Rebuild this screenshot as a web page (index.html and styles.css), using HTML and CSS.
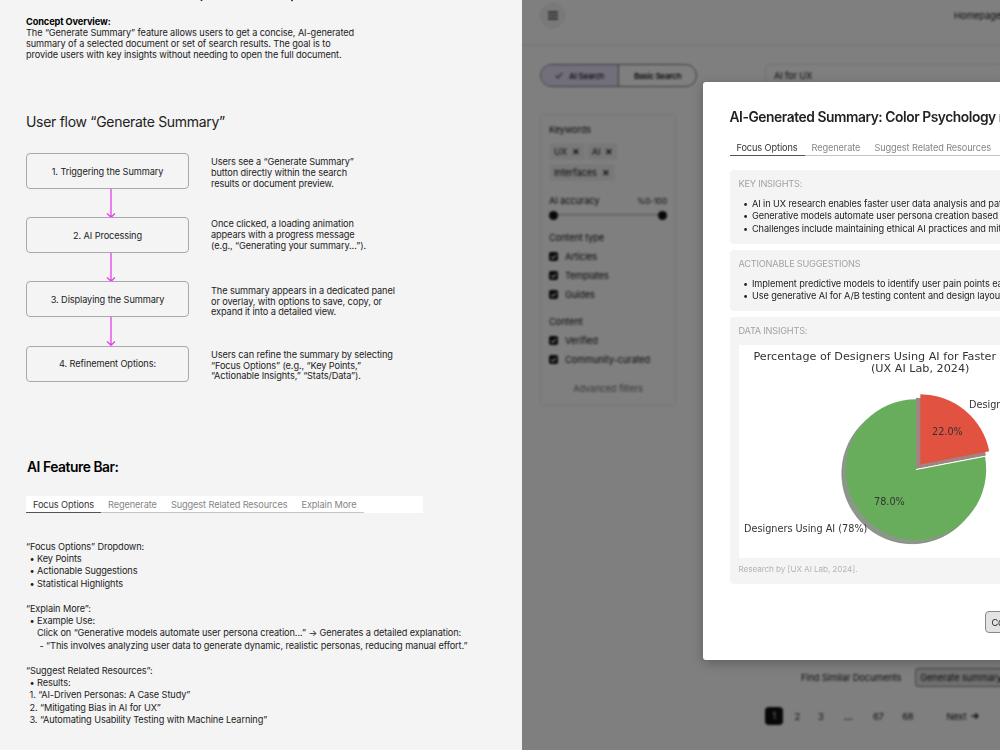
FILE: index.html
```html
<!DOCTYPE html>
<html lang="en">
<head>
    <meta charset="UTF-8">
    <title>Generate Summary - Concept</title>
    <link rel="stylesheet" href="styles.css">
</head>
<body>
    <!-- Concept notes -->
    <section class="notes">
        <svg class="title-tail" width="300" height="3" viewBox="0 0 300 3">
            <path d="M175.5 0v1M266.5 0l-1 1" fill="none" stroke="#222" stroke-width="1.6"/>
        </svg>
        <div class="overview">
            <h3>Concept Overview:</h3>
            <p>The “Generate Summary” feature allows users to get a concise, AI-generated<br>
            summary of a selected document or set of search results. The goal is to<br>
            provide users with key insights without needing to open the full document.</p>
        </div>

        <h2 class="flow-title">User flow “Generate Summary”</h2>
        <div class="flow">
            <div class="step">1. Triggering the Summary</div>
            <p class="desc">Users see a “Generate Summary”<br>button directly within the search<br>results or document preview.</p>
            <svg class="arrow" width="10" height="29" viewBox="0 0 10 29"><path d="M5 0v28M1 24.5l4 3.8l4-3.8"/></svg>

            <div class="step">2. AI Processing</div>
            <p class="desc raised">Once clicked, a loading animation<br>appears with a progress message<br>(e.g., “Generating your summary...”).</p>
            <svg class="arrow" width="10" height="29" viewBox="0 0 10 29"><path d="M5 0v28M1 24.5l4 3.8l4-3.8"/></svg>

            <div class="step">3. Displaying the Summary</div>
            <p class="desc">The summary appears in a dedicated panel<br>or overlay, with options to save, copy, or<br>expand it into a detailed view.</p>
            <svg class="arrow" width="10" height="29" viewBox="0 0 10 29"><path d="M5 0v28M1 24.5l4 3.8l4-3.8"/></svg>

            <div class="step">4. Refinement Options:</div>
            <p class="desc">Users can refine the summary by selecting<br>“Focus Options” (e.g., “Key Points,”<br>“Actionable Insights,” “Stats/Data”).</p>
        </div>

        <h2 class="bar-title">AI Feature Bar:</h2>
        <div class="feature-bar">
            <nav class="tabs">
                <span class="tab active">Focus Options</span>
                <span class="tab">Regenerate</span>
                <span class="tab">Suggest Related Resources</span>
                <span class="tab">Explain More</span>
            </nav>
        </div>

        <div class="details">
            <p>“Focus Options” Dropdown:</p>
            <p class="bullet">• Key Points</p>
            <p class="bullet">• Actionable Suggestions</p>
            <p class="bullet">• Statistical Highlights</p>
        </div>
        <div class="details">
            <p>“Explain More”:</p>
            <p class="bullet">• Example Use:</p>
            <p class="nested">Click on “Generative models automate user persona creation...” → Generates a detailed explanation:</p>
            <p class="nested deep">- “This involves analyzing user data to generate dynamic, realistic personas, reducing manual effort.”</p>
        </div>
        <div class="details">
            <p>“Suggest Related Resources”:</p>
            <p class="bullet">• Results:</p>
            <p class="bullet">1. “AI-Driven Personas: A Case Study”</p>
            <p class="bullet">2. “Mitigating Bias in AI for UX”</p>
            <p class="bullet">3. “Automating Usability Testing with Machine Learning”</p>
        </div>
    </section>

    <!-- Search page behind the modal -->
    <section class="screen">
        <div class="app">
            <header class="topbar">
                <span class="menu-btn">
                    <svg width="10" height="9" viewBox="0 0 10 9"><path d="M0 1.2h10M0 4.5h10M0 7.8h10" stroke="#333" stroke-width="1.5"/></svg>
                </span>
                <span class="nav-link">Homepage</span>
            </header>
            <div class="search-row">
                <div class="segmented">
                    <span class="seg selected">
                        <svg width="8" height="7" viewBox="0 0 8 7"><path d="M.7 3.6l2.2 2.2L7.3 1" fill="none" stroke="#333" stroke-width="1.1"/></svg>
                        AI Search
                    </span>
                    <span class="seg">Basic Search</span>
                </div>
                <div class="search-input">AI for UX</div>
            </div>
            <aside class="filters">
                <h4>Keywords</h4>
                <div class="chips">
                    <span class="chip">UX <b>✕</b></span>
                    <span class="chip">AI <b>✕</b></span>
                    <span class="chip">Interfaces <b>✕</b></span>
                </div>
                <div class="accuracy"><span>AI accuracy</span><small>%0-100</small></div>
                <div class="slider"><i></i><i></i></div>
                <h4 class="group">Content type</h4>
                <div class="check"><svg viewBox="0 0 10 10"><path d="M2.3 5.2l2 2l3.6-4"/></svg>Articles</div>
                <div class="check"><svg viewBox="0 0 10 10"><path d="M2.3 5.2l2 2l3.6-4"/></svg>Templates</div>
                <div class="check"><svg viewBox="0 0 10 10"><path d="M2.3 5.2l2 2l3.6-4"/></svg>Guides</div>
                <h4 class="group spaced">Content</h4>
                <div class="check"><svg viewBox="0 0 10 10"><path d="M2.3 5.2l2 2l3.6-4"/></svg>Verified</div>
                <div class="check"><svg viewBox="0 0 10 10"><path d="M2.3 5.2l2 2l3.6-4"/></svg>Community-curated</div>
                <div class="advanced">Advanced filters</div>
            </aside>
            <div class="result-actions">
                <span>Find Similar Documents</span>
                <span class="summary-btn">Generate summary</span>
            </div>
            <div class="pagination">
                <span class="current">1</span>
                <span>2</span>
                <span>3</span>
                <span class="dots">...</span>
                <span class="wide">67</span>
                <span class="wide">68</span>
                <span class="next">Next <svg width="8" height="8" viewBox="0 0 8 8"><path d="M.5 4h6.5M4.2 1.2L7 4L4.2 6.8" fill="none" stroke="#222" stroke-width="1.3"/></svg></span>
            </div>
        </div>
        <div class="overlay"></div>

        <!-- Summary modal -->
        <div class="modal">
            <h2>AI-Generated Summary: Color Psychology research</h2>
            <nav class="tabs">
                <span class="tab active">Focus Options</span>
                <span class="tab">Regenerate</span>
                <span class="tab">Suggest Related Resources</span>
                <span class="tab">Explain More</span>
            </nav>
            <div class="card insights">
                <h5>KEY INSIGHTS:</h5>
                <ul>
                    <li>AI in UX research enables faster user data analysis and pattern recognition.</li>
                    <li>Generative models automate user persona creation based on data.</li>
                    <li>Challenges include maintaining ethical AI practices and mitigating bias.</li>
                </ul>
            </div>
            <div class="card actions">
                <h5>ACTIONABLE SUGGESTIONS</h5>
                <ul>
                    <li>Implement predictive models to identify user pain points early.</li>
                    <li>Use generative AI for A/B testing content and design layouts.</li>
                </ul>
            </div>
            <div class="card data">
                <h5>DATA INSIGHTS:</h5>
                <svg class="chart" width="364" height="213" viewBox="0 0 364 213">
                    <text class="chart-title" x="14.5" y="14.5">Percentage of Designers Using AI for Faster Research</text>
                    <text class="chart-title" x="132" y="27">(UX AI Lab, 2024)</text>
                    <!-- shadows -->
                    <path d="M173 128.5V58.3A70.2 70.2 0 1 0 241.96 115.35Z" fill="#8b9889" stroke="#73836f" stroke-width=".6"/>
                    <path d="M177.3 123.5V53.3A70.2 70.2 0 0 1 246.26 110.35Z" fill="#a08482" stroke="#806d6b" stroke-width=".6"/>
                    <!-- slices -->
                    <path d="M177 124.5V54.3A70.2 70.2 0 1 0 245.96 111.35Z" fill="#68ad5c"/>
                    <path d="M177 124.5L246 111.3" stroke="#fff" stroke-width="1"/>
                    <path d="M177.3 123.5V53.3H181V119.5L246.3 107V110.3Z" fill="#a08482"/>
                    <path d="M181.3 119.5V49.3A70.2 70.2 0 0 1 250.26 106.35Z" fill="#e25241"/>
                    <text x="193" y="90">22.0%</text>
                    <text x="135" y="160">78.0%</text>
                    <text x="5" y="187.3">Designers Using AI (78%)</text>
                    <text x="230" y="63">Designers Not Using AI</text>
                </svg>
                <p class="source">Research by [UX AI Lab, 2024].</p>
            </div>
            <div class="modal-actions"><span class="btn">Copy</span></div>
        </div>
    </section>
</body>
</html>
```
FILE: styles.css
```css
* {
    box-sizing: border-box;
}
body {
    margin: 0;
    width: 1000px;
    height: 750px;
    display: flex;
    overflow: hidden;
    font-family: Inter, sans-serif;
    font-size: 9.2px;
    letter-spacing: -0.1px;
    color: #222;
    background: #f4f4f4;
}
h2, h3, h4, h5, p, ul {
    margin: 0;
    padding: 0;
}

/* Notes column */
.notes {
    flex: 0 0 522px;
    height: 750px;
    padding-left: 26px;
    white-space: nowrap;
}
.title-tail {
    display: block;
}
.overview {
    margin-top: 14.4px;
    line-height: 10.7px;
}
.overview h3 {
    font-size: 9.2px;
    font-weight: 700;
    color: #000;
}
.flow-title {
    margin-top: 53px;
    font-size: 14px;
    line-height: 18px;
    font-weight: 400;
    letter-spacing: -0.3px;
}
.flow {
    display: grid;
    grid-template-columns: 163px 1fr;
    column-gap: 22px;
    margin-top: 21.8px;
}
.step {
    height: 36px;
    display: flex;
    align-items: center;
    justify-content: center;
    border: 1px solid #a8a8a8;
    border-radius: 4px;
}
.desc {
    height: 36px;
    padding-top: 4.4px;
    line-height: 10.7px;
}
.desc.raised {
    padding-top: 2.2px;
}
.arrow {
    grid-column: 1 / 3;
    margin: 0 0 -0.8px 80px;
    fill: none;
    stroke: #e83cf0;
    stroke-width: 1.3;
}
.bar-title {
    margin-top: 76.3px;
    padding-left: 1px;
    font-size: 13.8px;
    line-height: 18px;
    font-weight: 600;
    letter-spacing: -0.45px;
    color: #000;
}
.feature-bar {
    width: 397px;
    margin-top: 20px;
    margin-bottom: 27.6px;
    background: #fff;
}
.tabs {
    display: flex;
    line-height: 17px;
    white-space: nowrap;
}
.feature-bar .tabs {
    width: 338px;
}
.tab {
    height: 17px;
    padding: 0 0 0 7px;
    color: #858585;
    border-bottom: 1px solid #c4c4c4;
}
.tab:last-child {
    flex: 1;
}
.tab.active {
    padding-right: 7px;
    color: #333;
    border-bottom-color: #555;
}
.tab:nth-child(2), .tab:nth-child(3) {
    padding-right: 7px;
}
.details {
    line-height: 12.4px;
    margin-bottom: 12.4px;
}
.bullet {
    padding-left: 3.5px;
}
.nested {
    padding-left: 11px;
}
.nested.deep {
    padding-left: 13.5px;
}

/* Search page */
.screen {
    position: relative;
    flex: 0 0 478px;
    height: 750px;
    overflow: hidden;
    background: #fff;
}
.app {
    width: 700px;
    white-space: nowrap;
}
.topbar {
    height: 46px;
    display: flex;
    padding: 3px 0 0 18px;
    border-bottom: 1px solid #e4e4e4;
}
.menu-btn {
    width: 25px;
    height: 25px;
    display: flex;
    align-items: center;
    justify-content: center;
    border-radius: 50%;
    background: #f3f3f3;
    border: 1px solid #e6e6e6;
}
.nav-link {
    margin-left: 389px;
    line-height: 26px;
}
.search-row {
    display: flex;
    gap: 68px;
    padding: 18px 0 0 18px;
}
.segmented {
    display: flex;
    width: 157px;
    height: 23px;
    border: 1px solid #777;
    border-radius: 12px;
    overflow: hidden;
    font-weight: 600;
    font-size: 8.2px;
    letter-spacing: -0.35px;
}
.seg {
    flex: 1;
    display: flex;
    align-items: center;
    justify-content: center;
    gap: 6px;
}
.seg.selected {
    background: #e4dcf4;
    border-right: 1px solid #777;
    font-weight: 500;
    letter-spacing: -0.3px;
}
.search-input {
    width: 360px;
    height: 23px;
    padding-left: 8px;
    line-height: 22px;
    border: 1px solid #e0e0e0;
    border-radius: 6px;
}
.filters {
    width: 136px;
    height: 292px;
    margin: 27px 0 0 18px;
    padding: 8px 8px 0;
    border: 1px solid #e6e6e6;
    border-radius: 3px;
}
.filters h4 {
    font-size: 9.2px;
    line-height: 14px;
    font-weight: 400;
}
.filters h4.group {
    margin-bottom: 2.5px;
}
.chips {
    display: flex;
    flex-wrap: wrap;
    gap: 3.5px 2px;
    margin-top: 6px;
}
.chip {
    height: 17px;
    padding: 0 5px;
    line-height: 17px;
    background: #f1f1f1;
    border-radius: 3px;
}
.chip b {
    margin-left: 2.5px;
}
.accuracy {
    display: flex;
    justify-content: space-between;
    margin-top: 13px;
    line-height: 14px;
}
.accuracy small {
    font-size: 8.2px;
}
.slider {
    display: flex;
    align-items: center;
    justify-content: space-between;
    height: 9px;
    margin: 3px 0 11px;
    background: linear-gradient(#bbb, #bbb) center / 100% 1.5px no-repeat;
}
.slider i {
    width: 9px;
    height: 9px;
    border-radius: 50%;
    background: #111;
}
.check {
    display: flex;
    align-items: center;
    gap: 7px;
    height: 19.2px;
}
.check svg {
    width: 9px;
    height: 9px;
    border-radius: 2px;
    background: #111;
    fill: none;
    stroke: #fff;
    stroke-width: 1.2;
}
.filters h4.spaced {
    margin-top: 10px;
}
.advanced {
    margin-top: 14px;
    line-height: 11px;
    text-align: center;
    color: #777;
}
.result-actions {
    display: flex;
    align-items: center;
    gap: 14px;
    margin: 262px 0 0 279px;
}
.summary-btn {
    height: 19px;
    padding: 0 4px;
    line-height: 17px;
    background: #e0e0e0;
    border: 1px solid #888;
    border-radius: 3px;
}
.pagination {
    display: flex;
    align-items: center;
    margin: 20px 0 0 243px;
}
.pagination span {
    width: 23.5px;
    text-align: center;
}
.pagination .current {
    width: 18px;
    height: 18px;
    margin-right: 2.5px;
    line-height: 18px;
    color: #ccc;
    background: #111;
    border-radius: 4px;
}
.pagination .dots {
    width: 31px;
    font-weight: 700;
}
.pagination .wide {
    width: 29.5px;
}
.pagination .next {
    width: 34px;
    margin-left: 24px;
    display: flex;
    align-items: center;
    gap: 5px;
}
.overlay {
    position: absolute;
    inset: 0;
    background: rgba(0, 0, 0, 0.5);
    backdrop-filter: blur(0.8px);
}

/* Modal */
.modal {
    position: absolute;
    left: 180.5px;
    top: 82px;
    width: 436px;
    height: 578px;
    padding: 26px 27px 0;
    background: #fff;
    border-radius: 3px;
    box-shadow: 0 3px 12px rgba(0, 0, 0, 0.25);
    white-space: nowrap;
}
.modal h2 {
    font-size: 13.8px;
    line-height: 18px;
    font-weight: 600;
    letter-spacing: -0.44px;
}
.modal .tabs {
    margin-top: 13px;
    margin-bottom: 14px;
}
.card {
    margin-bottom: 6px;
    padding: 8px 9px 0;
    background: #f4f4f4;
    border-radius: 4px;
}
.card.insights {
    height: 74px;
}
.card.actions {
    height: 61px;
}
.card.data {
    height: 266.5px;
}
.card h5 {
    font-size: 9.2px;
    line-height: 12px;
    font-weight: 400;
    letter-spacing: -0.22px;
    color: #a2a2a2;
}
.card ul {
    margin-top: 8px;
    padding-left: 4.5px;
    line-height: 12.4px;
    list-style: none;
}
.card li::before {
    content: "•";
    display: inline-block;
    width: 9px;
}
.chart {
    display: block;
    margin-top: 8px;
    background: #fff;
    font-family: "DejaVu Sans", sans-serif;
    font-size: 9.7px;
    letter-spacing: 0;
    fill: #333;
}
.chart-title {
    font-size: 11.2px;
}
.source {
    margin-top: 5px;
    font-size: 8.2px;
    line-height: 12px;
    color: #b4b4b4;
}
.modal-actions {
    margin: 27px 0 0 255px;
}
.btn {
    display: inline-block;
    height: 22px;
    padding: 0 6px;
    line-height: 21px;
    background: #e3e3e3;
    border: 1px solid #888;
    border-radius: 4px;
}
```
